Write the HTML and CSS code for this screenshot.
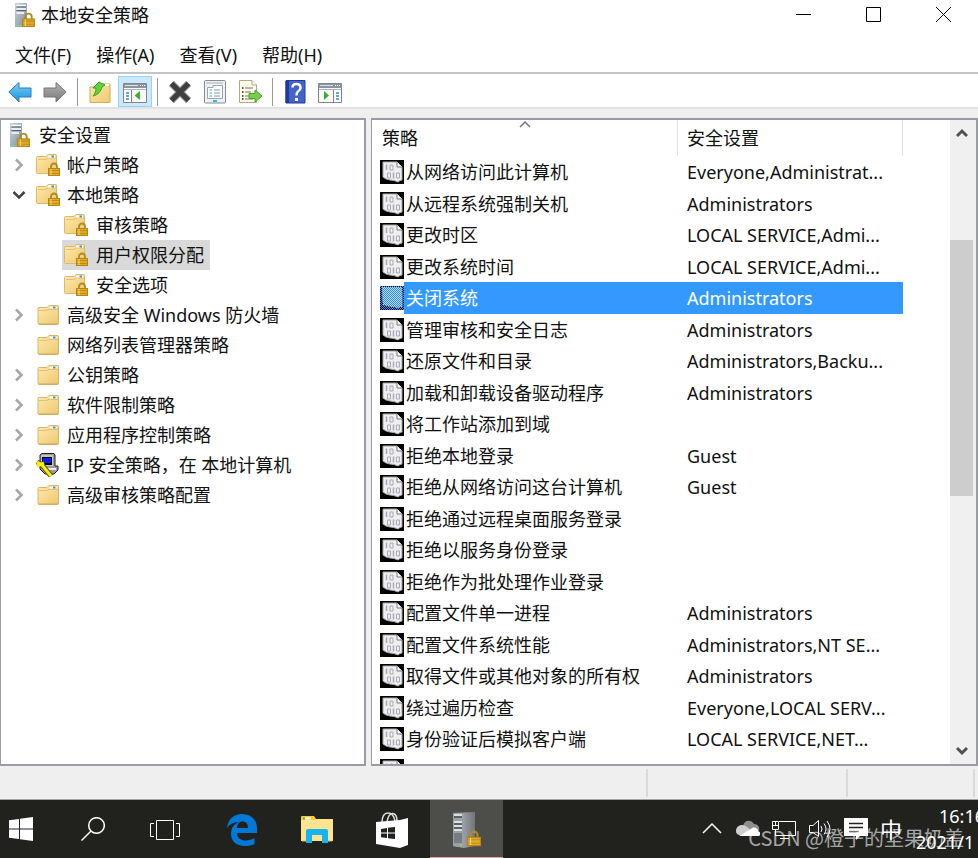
FILE: index.html
```html
<!DOCTYPE html>
<html lang="zh-CN">
<head>
    <meta charset="UTF-8">
    <meta name="viewport" content="width=device-width, initial-scale=1.0">
    <title>本地安全策略</title>
    <link rel="stylesheet" href="styles.css">
</head>
<body>
    <!-- Shared icons -->
    <svg class="sprite" aria-hidden="true">
        <defs>
            <linearGradient id="folderFill" x1="0" y1="0" x2="1" y2="1">
                <stop offset="0" stop-color="#ffe9ab"/>
                <stop offset="1" stop-color="#eec871"/>
            </linearGradient>
            <linearGradient id="serverFill" x1="0" y1="0" x2="1" y2="1">
                <stop offset="0" stop-color="#c9d5dc"/>
                <stop offset="1" stop-color="#7b8d99"/>
            </linearGradient>
            <linearGradient id="blueFill" x1="0" y1="0" x2="0" y2="1">
                <stop offset="0" stop-color="#7fd0f8"/>
                <stop offset="1" stop-color="#1592dc"/>
            </linearGradient>
            <linearGradient id="greyFill" x1="0" y1="0" x2="0" y2="1">
                <stop offset="0" stop-color="#b5b5b5"/>
                <stop offset="1" stop-color="#777777"/>
            </linearGradient>
            <linearGradient id="towerFill" x1="0" y1="0" x2="1" y2="0">
                <stop offset="0" stop-color="#bfc4c8"/>
                <stop offset="1" stop-color="#6e757b"/>
            </linearGradient>
        </defs>
        <symbol id="lock" viewBox="0 0 12 14">
            <path d="M3 7V4.500a3 3 0 0 1 6 0V7" fill="none" stroke="#b18a24" stroke-width="1.800"/>
            <rect x="0.500" y="6.500" width="11" height="7" fill="#e0ac28" stroke="#b98412"/>
            <path d="M1 8.500h10M1 11.500h10" stroke="#c08c14"/>
            <path d="M3 7v6" stroke="#f7d878"/>
        </symbol>
        <symbol id="folder" viewBox="0 0 24 24">
            <path d="M2 5.500Q2 4.500 3 4.500H11L13 2.500H21.500Q22.500 2.500 22.500 3.500V20.500Q22.500 21.500 21.500 21.500H3Q2 21.500 2 20.500Z" fill="url(#folderFill)" stroke="#d9b566"/>
            <path d="M12 6.500H22M3 7.500H11L13 6" fill="none" stroke="#e3c077"/>
            <path d="M13.500 4.500h7" stroke="#fff" stroke-width="2"/>
            <path d="M17 4.500h2.500" stroke="#3d93d8" stroke-width="2"/>
            <path d="M3 21h19" stroke="#cda95d"/>
        </symbol>
        <symbol id="folder-lock" viewBox="0 0 24 24">
            <path d="M.5 4.500Q.5 3.500 1.500 3.500H10L12 1.500H19.500Q20.500 1.500 20.500 2.500V20.500H1.500Q.5 20.500 .5 19.500Z" fill="url(#folderFill)" stroke="#dcb96b"/>
            <path d="M2 6.500H10L12 5H20" fill="none" stroke="#e3c077"/>
            <path d="M12 3.500h7" stroke="#fff" stroke-width="2"/>
            <path d="M15.500 3.500h2.500" stroke="#3d93d8" stroke-width="2"/>
            <use href="#lock" x="12" y="9" width="12" height="14"/>
        </symbol>
        <symbol id="server-lock" viewBox="0 0 20 24">
            <path d="M0 0H12V24H0Z" fill="url(#serverFill)"/>
            <path d="M1.500 2.500H11M1.500 6H11M1.500 10H9" stroke="#fff" stroke-width="1.500"/>
            <path d="M1.500 4H11M1.500 7.500H11" stroke="#52616b"/>
            <path d="M1 22.500H7" stroke="#9fc4a4"/>
            <use href="#lock" x="7" y="9" width="13" height="15"/>
        </symbol>
        <symbol id="ipsec" viewBox="0 0 24 24">
            <path d="M4 2L6 .5H18L19 2V13H22V17L18 21H9L4 16Z" fill="#9b9b9b" stroke="#222"/>
            <path d="M5 2H17V13H5Z" fill="#c6c6c6"/>
            <path d="M6 4H16V12H6Z" fill="#000"/>
            <path d="M7 5H15V10H7Z" fill="#0a1ff0"/>
            <path d="M8 16H20" stroke="#eee" stroke-width="2"/>
            <path d="M1 9L6 12L15 23" fill="none" stroke="#555500" stroke-width="5"/>
            <path d="M1 9L6 12L15 23" fill="none" stroke="#f7ee11" stroke-width="3"/>
            <path d="M1 13L8 10" stroke="#f7ee11" stroke-width="3"/>
        </symbol>
        <symbol id="policy" viewBox="0 0 24 24">
            <path d="M0 0H24V24H0Z" fill="#000"/>
            <path d="M3 2H17L22 7V20L20 20.500L18 22L14 20.500L10 20L6 19L3 17Z" fill="#efefef" stroke="#a8a8a8"/>
            <path d="M17 2V7H22" fill="#fff" stroke="#777"/>
            <path d="M6.500 4.500V10M13.500 12.500V18.500" stroke="#aaa7b8" stroke-width="1.500"/>
            <path d="M10 5h3v5h-3ZM7.500 13h3v5h-3ZM16.500 13h3v5h-3Z" fill="none" stroke="#aaa7b8"/>
        </symbol>
        <pattern id="dither" width="2" height="2" patternUnits="userSpaceOnUse">
            <path d="M0 0h1v1H0ZM1 1h1v1H1Z" fill="#2f8ff0"/>
        </pattern>
        <symbol id="policy-selected" viewBox="0 0 24 24">
            <use href="#policy" width="24" height="24"/>
            <path d="M2 1H22V21H14L3 19Z" fill="#b8d6f6"/>
            <path d="M0 0H24V24H0Z" fill="url(#dither)"/>
        </symbol>
        <symbol id="chevron-right" viewBox="0 0 12 14">
            <path d="M3 1.500L8.500 7L3 12.500" fill="none" stroke="#a6a6a6" stroke-width="2.500"/>
        </symbol>
        <symbol id="chevron-down" viewBox="0 0 14 12">
            <path d="M1.500 3L7 8.500L12.500 3" fill="none" stroke="#404040" stroke-width="2.500"/>
        </symbol>
    </svg>

    <main class="window">
        <header class="titlebar">
            <svg class="title-icon"><use href="#server-lock"/></svg>
            <h1>本地安全策略</h1>
            <div class="window-buttons">
                <button type="button" aria-label="最小化"><svg width="15" height="15"><path d="M0 7.500H15" stroke="#000"/></svg></button>
                <button type="button" aria-label="最大化"><svg width="15" height="15"><path d="M.5 .5H14.500V14.500H.5Z" fill="none" stroke="#000"/></svg></button>
                <button type="button" aria-label="关闭"><svg width="15" height="15"><path d="M0 0L15 15M15 0L0 15" stroke="#000"/></svg></button>
            </div>
        </header>

        <nav class="menubar">
            <button type="button">文件(F)</button>
            <button type="button">操作(A)</button>
            <button type="button">查看(V)</button>
            <button type="button">帮助(H)</button>
        </nav>

        <div class="toolbar">
            <button type="button" aria-label="后退">
                <svg viewBox="0 0 24 24"><path d="M.8 12L11 2.500V8H23V17H11V22Z" fill="url(#blueFill)" stroke="#2a7db8"/></svg>
            </button>
            <button type="button" aria-label="前进">
                <svg viewBox="0 0 24 24"><path d="M23.200 12L13 2.500V8H1V17H13V22Z" fill="url(#greyFill)" stroke="#777"/></svg>
            </button>
            <span class="separator"></span>
            <button type="button" aria-label="上一级">
                <svg viewBox="0 0 24 24"><path d="M2 7H12L14 4H22V22.500H2Z" fill="url(#folderFill)" stroke="#d5ae58"/><path d="M15 5h6" stroke="#fff" stroke-width="2"/><path d="M5 16C7 14 8 11 8 8H5L11 2L17 5L14 7C13 11 10 15 5 16Z" fill="#5fd23c" stroke="#36a21b"/></svg>
            </button>
            <button type="button" class="active" aria-label="显示控制台树">
                <svg viewBox="0 0 24 24"><path d="M.5 3.500H23.500V22.500H.5Z" fill="#fafafa" stroke="#7e8790"/><path d="M1 4H23V8H1Z" fill="#8b959e"/><path d="M2 5.500H15" stroke="#dde3e8"/><path d="M17 5.500H22" stroke="#fff" stroke-dasharray="1 1"/><path d="M1 9.500H23" stroke="#aeb6bd"/><path d="M8.500 10V22" stroke="#7e8790"/><path d="M3 13H6M3 16H6M3 19H6" stroke="#388bc5" stroke-width="1.500"/><path d="M17 11V20L11.500 15.500Z" fill="#3fae2a"/></svg>
            </button>
            <span class="separator"></span>
            <button type="button" aria-label="删除">
                <svg viewBox="0 0 24 24"><path d="M3.500 3.500L20.500 20.500M20.500 3.500L3.500 20.500" stroke="#8b8b8b" stroke-width="7"/><path d="M3.500 3.500L20.500 20.500M20.500 3.500L3.500 20.500" stroke="#3f3f3f" stroke-width="5"/></svg>
            </button>
            <button type="button" aria-label="属性">
                <svg viewBox="0 0 24 24"><rect x="1.500" y=".5" width="21" height="22.500" rx="1" fill="#f0f1f2" stroke="#858b90"/><path d="M3 3H20" stroke="#a8afb5"/><path d="M4.500 7.500H10V5.500H19.500V18.500H4.500Z" fill="#fff" stroke="#9aa5ae"/><path d="M11 10H17M11 13H17M11 16H17" stroke="#8a949c"/><path d="M6.500 10H9M6.500 13H9M6.500 16H9" stroke="#37b0dd"/><path d="M10 21H14" stroke="#2cb9df" stroke-width="2"/></svg>
            </button>
            <button type="button" aria-label="导出列表">
                <svg viewBox="0 0 24 24"><path d="M1.500 .5H14L18.500 5V22.500H1.500Z" fill="#fffbe9" stroke="#b0a88c"/><path d="M14 .5V5H18.500" fill="#fff" stroke="#b0a88c"/><path d="M7 8H15M7 12H13M7 16H12M7 19H15" stroke="#74746e"/><path d="M4 8H5.500M4 12H5.500M4 16H5.500M4 19H5.500" stroke="#222" stroke-width="1.500"/><path d="M11 13.500H17V10L24 16L17 22V18.500H11Z" fill="#75cf48" stroke="#48a827"/></svg>
            </button>
            <span class="separator"></span>
            <button type="button" aria-label="帮助">
                <svg viewBox="0 0 24 24"><path d="M3 .5H22V23H3Z" fill="#4263c8" stroke="#203a9a"/><path d="M2.500 1H6V23H2.500Z" fill="#2037a0"/><path d="M9.500 7.500Q9.500 4 13.500 4T17.500 8Q17.500 10 15 11.500Q13.500 12.500 13.500 15.500" fill="none" stroke="#fff" stroke-width="2.500"/><path d="M12 18H15V21H12Z" fill="#fff"/></svg>
            </button>
            <button type="button" aria-label="显示操作窗格">
                <svg viewBox="0 0 24 24"><path d="M.5 3.500H23.500V22.500H.5Z" fill="#fafafa" stroke="#7e8790"/><path d="M1 4H23V8H1Z" fill="#8b959e"/><path d="M2 5.500H15" stroke="#dde3e8"/><path d="M17 5.500H22" stroke="#fff" stroke-dasharray="1 1"/><path d="M1 9.500H23" stroke="#aeb6bd"/><path d="M15.500 10V22" stroke="#7e8790"/><path d="M18 13H21M18 16H21M18 19H21" stroke="#388bc5" stroke-width="1.500"/><path d="M6 11V20L11 15.500Z" fill="#3fae2a"/></svg>
            </button>
        </div>

        <div class="panes">
            <section class="tree pane">
                <div class="node root"><svg class="title-icon"><use href="#server-lock"/></svg>安全设置</div>
                <ul>
                    <li>
                        <div class="node"><button type="button" aria-label="展开"><svg class="closed"><use href="#chevron-right"/></svg></button><svg class="icon"><use href="#folder-lock"/></svg>帐户策略</div>
                    </li>
                    <li>
                        <div class="node"><button type="button" aria-label="折叠"><svg class="open"><use href="#chevron-down"/></svg></button><svg class="icon"><use href="#folder-lock"/></svg>本地策略</div>
                        <ul class="children">
                            <li><div class="node"><svg class="icon"><use href="#folder-lock"/></svg>审核策略</div></li>
                            <li><div class="node selected"><svg class="icon"><use href="#folder-lock"/></svg>用户权限分配</div></li>
                            <li><div class="node"><svg class="icon"><use href="#folder-lock"/></svg>安全选项</div></li>
                        </ul>
                    </li>
                    <li>
                        <div class="node"><button type="button" aria-label="展开"><svg class="closed"><use href="#chevron-right"/></svg></button><svg class="icon"><use href="#folder"/></svg>高级安全 Windows 防火墙</div>
                    </li>
                    <li>
                        <div class="node leaf"><svg class="icon"><use href="#folder"/></svg>网络列表管理器策略</div>
                    </li>
                    <li>
                        <div class="node"><button type="button" aria-label="展开"><svg class="closed"><use href="#chevron-right"/></svg></button><svg class="icon"><use href="#folder"/></svg>公钥策略</div>
                    </li>
                    <li>
                        <div class="node"><button type="button" aria-label="展开"><svg class="closed"><use href="#chevron-right"/></svg></button><svg class="icon"><use href="#folder"/></svg>软件限制策略</div>
                    </li>
                    <li>
                        <div class="node"><button type="button" aria-label="展开"><svg class="closed"><use href="#chevron-right"/></svg></button><svg class="icon"><use href="#folder"/></svg>应用程序控制策略</div>
                    </li>
                    <li>
                        <div class="node"><button type="button" aria-label="展开"><svg class="closed"><use href="#chevron-right"/></svg></button><svg class="icon"><use href="#ipsec"/></svg>IP 安全策略，在 本地计算机</div>
                    </li>
                    <li>
                        <div class="node"><button type="button" aria-label="展开"><svg class="closed"><use href="#chevron-right"/></svg></button><svg class="icon"><use href="#folder"/></svg>高级审核策略配置</div>
                    </li>
                </ul>
            </section>

            <section class="list pane">
                <div class="list-body">
                    <table>
                        <thead>
                            <tr>
                                <th class="col-name">策略<svg class="sort" viewBox="0 0 12 7"><path d="M1 6L6 1L11 6" fill="none" stroke="#777" stroke-width="1.500"/></svg></th>
                                <th class="col-value">安全设置</th>
                            </tr>
                        </thead>
                        <tbody>
                            <tr><td><div class="name"><svg class="icon"><use href="#policy"/></svg><span>从网络访问此计算机</span></div></td><td>Everyone,Administrat...</td></tr>
                            <tr><td><div class="name"><svg class="icon"><use href="#policy"/></svg><span>从远程系统强制关机</span></div></td><td>Administrators</td></tr>
                            <tr><td><div class="name"><svg class="icon"><use href="#policy"/></svg><span>更改时区</span></div></td><td>LOCAL SERVICE,Admi...</td></tr>
                            <tr><td><div class="name"><svg class="icon"><use href="#policy"/></svg><span>更改系统时间</span></div></td><td>LOCAL SERVICE,Admi...</td></tr>
                            <tr class="selected"><td><div class="name"><svg class="icon"><use href="#policy-selected"/></svg><span>关闭系统</span></div></td><td>Administrators</td></tr>
                            <tr><td><div class="name"><svg class="icon"><use href="#policy"/></svg><span>管理审核和安全日志</span></div></td><td>Administrators</td></tr>
                            <tr><td><div class="name"><svg class="icon"><use href="#policy"/></svg><span>还原文件和目录</span></div></td><td>Administrators,Backu...</td></tr>
                            <tr><td><div class="name"><svg class="icon"><use href="#policy"/></svg><span>加载和卸载设备驱动程序</span></div></td><td>Administrators</td></tr>
                            <tr><td><div class="name"><svg class="icon"><use href="#policy"/></svg><span>将工作站添加到域</span></div></td><td></td></tr>
                            <tr><td><div class="name"><svg class="icon"><use href="#policy"/></svg><span>拒绝本地登录</span></div></td><td>Guest</td></tr>
                            <tr><td><div class="name"><svg class="icon"><use href="#policy"/></svg><span>拒绝从网络访问这台计算机</span></div></td><td>Guest</td></tr>
                            <tr><td><div class="name"><svg class="icon"><use href="#policy"/></svg><span>拒绝通过远程桌面服务登录</span></div></td><td></td></tr>
                            <tr><td><div class="name"><svg class="icon"><use href="#policy"/></svg><span>拒绝以服务身份登录</span></div></td><td></td></tr>
                            <tr><td><div class="name"><svg class="icon"><use href="#policy"/></svg><span>拒绝作为批处理作业登录</span></div></td><td></td></tr>
                            <tr><td><div class="name"><svg class="icon"><use href="#policy"/></svg><span>配置文件单一进程</span></div></td><td>Administrators</td></tr>
                            <tr><td><div class="name"><svg class="icon"><use href="#policy"/></svg><span>配置文件系统性能</span></div></td><td>Administrators,NT SE...</td></tr>
                            <tr><td><div class="name"><svg class="icon"><use href="#policy"/></svg><span>取得文件或其他对象的所有权</span></div></td><td>Administrators</td></tr>
                            <tr><td><div class="name"><svg class="icon"><use href="#policy"/></svg><span>绕过遍历检查</span></div></td><td>Everyone,LOCAL SERV...</td></tr>
                            <tr><td><div class="name"><svg class="icon"><use href="#policy"/></svg><span>身份验证后模拟客户端</span></div></td><td>LOCAL SERVICE,NET...</td></tr>
                            <tr><td><div class="name"><svg class="icon"><use href="#policy"/></svg></div></td><td></td></tr>
                        </tbody>
                    </table>
                </div>
                <div class="scrollbar">
                    <button type="button" aria-label="向上滚动"><svg width="12" height="10"><path d="M1 8L6 3L11 8" fill="none" stroke="#505050" stroke-width="3"/></svg></button>
                    <div class="track"><div class="thumb"></div></div>
                    <button type="button" aria-label="向下滚动"><svg width="12" height="10"><path d="M1 2L6 7L11 2" fill="none" stroke="#505050" stroke-width="3"/></svg></button>
                </div>
            </section>
        </div>

        <footer class="statusbar">
            <span class="wide"></span>
            <span class="medium"></span>
            <span class="small"></span>
        </footer>
    </main>

    <div class="taskbar">
        <button type="button" class="start" aria-label="开始">
            <svg width="24" height="24"><path d="M0 3.300L10 2V11.500H0ZM11 1.800L24 0V11.500H11ZM0 12.500H10V22L0 20.700ZM11 12.500H24V24L11 22.200Z" fill="#fff"/></svg>
        </button>
        <button type="button" class="tool" aria-label="搜索">
            <svg width="24" height="24" fill="none" stroke="#fff" stroke-width="1.500"><circle cx="15.500" cy="8.500" r="7.800"/><path d="M10 14L.5 23.500"/></svg>
        </button>
        <button type="button" class="tool" aria-label="任务视图">
            <svg width="30" height="24" fill="none" stroke="#fff"><path d="M6.500 3.500H23.500V22.500H6.500ZM4 6.500H.5V19.500H4M26 6.500H29.500V19.500H26"/></svg>
        </button>
        <div class="apps">
            <button type="button" aria-label="Edge">
                <svg width="30" height="32"><path d="M0 14C1 5 7 0 15 0C25 0 30 7 30 14V19H10C10 24 14 26.500 19 26.500C22 26.500 25 25.500 27.500 24V30C25 31.500 21.500 32 18 32C9 32 4 27 4 20C4 14 7 10 12 8C5 8.500 2 11 0 14ZM10 14H21C21 10 19 7.500 15.500 7.500C12 7.500 10.300 10 10 14Z" fill="#0078d7" fill-rule="evenodd"/></svg>
            </button>
            <button type="button" aria-label="文件资源管理器">
                <svg width="32" height="28"><path d="M0 1Q0 0 1 0H13L15 3H31Q32 3 32 4V25H0Z" fill="#ffc938"/><path d="M0 4H13L15 3H32V25H0Z" fill="#ffe38e"/><path d="M3 2.500H10" stroke="#fff" stroke-width="2"/><path d="M2 2.500H4" stroke="#31b48a" stroke-width="2"/><path d="M5 15Q5 13 7 13H25Q27 13 27 15V27H21V19H11V27H5Z" fill="#17b3ee"/><path d="M5 25H1M27 25H31" stroke="#eebd3d"/></svg>
            </button>
            <button type="button" aria-label="应用商店">
                <svg width="34" height="36"><path d="M7 11C7 4 9 1 13 1S19 4 20 9M12 10C13 4 15 1 18 1.500S22 5 22 9" fill="none" stroke="#ddd" stroke-width="1.500"/><path d="M1 10L25 8L33 6V33L25 36L1 32Z" fill="#fff"/><path d="M6 17L12 16V20.500H6ZM13 15.800L20 15V20.500H13ZM6 21.500H12V26L6 25.200ZM13 21.500H20V27L13 26.200Z" fill="#21221e"/></svg>
            </button>
            <button type="button" class="running" aria-label="本地安全策略">
                <svg width="30" height="36"><path d="M1 1L23 0V34L12 36L1 34Z" fill="url(#towerFill)"/><path d="M1 1H11V35L1 34Z" fill="#9ba0a4"/><path d="M2 3H10M2 10H10M2 14H10M2 18H10" stroke="#f2f2f2" stroke-width="1.500"/><path d="M2 5H10M2 12H10M2 16H10" stroke="#4a4e52" stroke-width="1.500"/><path d="M2 21H10V31H2Z" fill="#777d82"/><path d="M8 33h2" stroke="#90dd28" stroke-width="2"/><use href="#lock" x="15" y="17" width="14" height="18"/></svg>
            </button>
        </div>

        <div class="tray">
            <button type="button" aria-label="显示隐藏的图标"><svg width="24" height="24"><path d="M3 16L12 7L21 16" fill="none" stroke="#fff" stroke-width="1.500"/></svg></button>
            <svg width="24" height="24"><path d="M7 9C8 3 15 2 18 7C22 7 24 10 23 14H8Z" fill="#8f8f8f"/><path d="M0 14C0 8 7 6 11 10L15 13L5 18C1 18 0 16 0 14Z" fill="#cfcfcf"/><path d="M3 19L15 12C18 9 22 11 22 14C25 15 25 19 22 19Z" fill="#fff"/></svg>
            <svg width="24" height="24" fill="none" stroke="#fff"><path d="M7 4.500H23.500V18.500H3.500V12M8 21.500H17M.5 4.500H6.500V12.500H.5ZM1 8.500H6M3.500 5V8"/></svg>
            <svg width="24" height="24" fill="none" stroke="#fff"><path d="M1.500 8.500H5L10.500 3.500V19.500L5 15.500H1.500ZM13 9Q15 12 13 15M16 6.500Q20 12 16 17.500M19 4Q25 12 19 20"/></svg>
            <svg width="24" height="24"><path d="M0 1H24V19H16L12 23V19H0Z" fill="#fff"/><path d="M5 6.500H19M5 10.500H19M5 14.500H15" stroke="#21221e" stroke-width="1.500"/></svg>
            <span class="ime">中</span>
            <div class="clock"><time>16:16</time><span>2021/1</span></div>
        </div>
        <div class="watermark">CSDN @橙子的坚果奶盖</div>
    </div>
</body>
</html>
```
FILE: styles.css
```css
* {
    box-sizing: border-box;
}

body {
    margin: 0;
    height: 100vh;
    display: flex;
    flex-direction: column;
    overflow: hidden;
    background: #efefef;
    color: #111;
    font-family: "Noto Sans", "Noto Sans CJK SC", sans-serif;
    font-size: 18px;
    line-height: 24px;
}

button {
    padding: 0;
    border: none;
    background: transparent;
    color: inherit;
    font: inherit;
    display: flex;
    align-items: center;
    justify-content: center;
}

svg {
    display: block;
    flex-shrink: 0;
}

ul {
    list-style: none;
    margin: 0;
    padding: 0;
}

.sprite {
    position: absolute;
    width: 0;
    height: 0;
}

.icon {
    width: 24px;
    height: 24px;
}

.title-icon {
    width: 20px;
    height: 24px;
}

.window {
    flex: 1;
    min-height: 0;
    display: flex;
    flex-direction: column;
    border-bottom: 1px solid #a4a69c;
}

/* Title bar and menus */
.titlebar {
    height: 37px;
    padding: 0 0 8px 15px;
    display: flex;
    align-items: center;
    gap: 6px;
    background: #fff;
}

.titlebar h1 {
    margin: 0;
    font-size: 18px;
    font-weight: normal;
}

.window-buttons {
    display: flex;
    margin-left: auto;
}

.window-buttons button {
    width: 70px;
    height: 29px;
}

.menubar {
    height: 37px;
    padding-left: 15px;
    display: flex;
    align-items: center;
    gap: 25px;
    background: #fff;
    border-bottom: 2px solid #c3c5c8;
}

.toolbar {
    height: 35px;
    padding: 2px 0 0 3px;
    display: flex;
    align-items: center;
    gap: 1px;
    background: #fff;
    border-bottom: 2px solid #e3e3e3;
}

.toolbar button {
    width: 34px;
    height: 31px;
    border: 1px solid transparent;
}

.toolbar button.active {
    background: #cce8ff;
    border-color: #99d1ff;
}

.toolbar svg {
    width: 24px;
    height: 24px;
}

.separator {
    width: 1px;
    height: 28px;
    margin: 0 4px;
    background: #999;
}

/* Panes */
.panes {
    flex: 1;
    min-height: 0;
    margin-top: 9px;
    display: grid;
    grid-template-columns: minmax(220px, 366px) 1fr;
    grid-template-rows: 100%;
    gap: 5px;
}

.pane {
    background: #fff;
    border: 2px solid #989ca4;
    border-left-width: 1px;
    overflow: hidden;
}

.node {
    width: fit-content;
    height: 30px;
    padding-right: 6px;
    display: flex;
    align-items: center;
    white-space: nowrap;
}

.node button {
    width: 35px;
    height: 30px;
}

.node .icon {
    margin-right: 7px;
}

.node .closed {
    width: 12px;
    height: 14px;
}

.node .open {
    width: 14px;
    height: 12px;
}

.node.root {
    padding-left: 9px;
    gap: 9px;
}

.node.leaf {
    padding-left: 35px;
}

.children {
    padding-left: 61px;
}

.children .node {
    padding-left: 2px;
}

.children .icon {
    margin-right: 8px;
}

.node.selected {
    background: #d9d9d9;
}

/* Policy list */
.list {
    display: flex;
}

.list-body {
    flex: 1;
    min-width: 0;
    overflow: hidden;
}

table {
    width: 531px;
    table-layout: fixed;
    border-collapse: separate;
    border-spacing: 0;
}

th,
td {
    padding: 0;
    text-align: left;
    font-weight: normal;
    white-space: nowrap;
}

th {
    height: 36px;
    padding-left: 10px;
    border-right: 1px solid #e2e2e2;
}

.col-name {
    width: 306px;
    position: relative;
}

.col-value {
    padding-left: 9px;
}

.sort {
    position: absolute;
    top: 1px;
    left: 0;
    right: 0;
    margin: 0 auto;
    width: 12px;
    height: 7px;
}

tbody td {
    height: 31px;
}

tbody tr:nth-child(odd) td {
    height: 32px;
}

td:first-child {
    padding-left: 8px;
}

td:last-child {
    padding-left: 9px;
}

.name {
    display: flex;
    align-items: center;
    height: 100%;
}

.name span {
    flex: 1;
    padding-left: 2px;
}

tr.selected {
    color: #fff;
}

tr.selected .name span {
    line-height: 32px;
}

tr.selected .name span,
tr.selected td:last-child {
    background: #3399ff;
}

.scrollbar {
    width: 26px;
    padding-right: 3px;
    display: flex;
    flex-direction: column;
    background: #f0f0f0;
}

.scrollbar button {
    width: 23px;
    height: 26px;
}

.track {
    flex: 1;
    display: flex;
    flex-direction: column;
}

.track::before {
    content: "";
    flex: 94;
}

.thumb {
    flex: 255;
    background: #cdcdcd;
}

.track::after {
    content: "";
    flex: 242;
}

/* Status bar */
.statusbar {
    height: 33px;
    padding: 3px 3px 2px 0;
    display: flex;
}

.statusbar span {
    border-right: 2px solid #d9d9d9;
}

.wide {
    flex: 1;
}

.medium {
    width: 200px;
}

.small {
    width: 127px;
}

/* Taskbar */
.taskbar {
    position: relative;
    height: 58px;
    display: flex;
    align-items: center;
    background: #21221e;
    color: #fff;
    overflow: hidden;
}

.taskbar button {
    height: 58px;
}

.taskbar .start {
    width: 42px;
    margin-right: 15px;
}

.taskbar .tool {
    width: 72px;
}

.apps {
    display: flex;
    gap: 2px;
    margin-left: 4px;
}

.apps button {
    width: 73px;
    padding-top: 2px;
}

.apps .running {
    background: #4d4e4a;
    border-bottom: 1px solid #e9a3a3;
}

.tray {
    margin-left: auto;
    display: flex;
    align-items: center;
    gap: 12px;
}

.ime {
    width: 24px;
    font-size: 22px;
}

.clock {
    width: 62px;
    overflow: hidden;
    white-space: nowrap;
    line-height: 26px;
}

.clock time {
    display: block;
    padding-left: 23px;
}

.watermark {
    position: absolute;
    right: 14px;
    bottom: 8px;
    font-family: "Noto Sans CJK SC", sans-serif;
    font-size: 20px;
    color: rgba(255, 255, 255, 0.6);
}
```
